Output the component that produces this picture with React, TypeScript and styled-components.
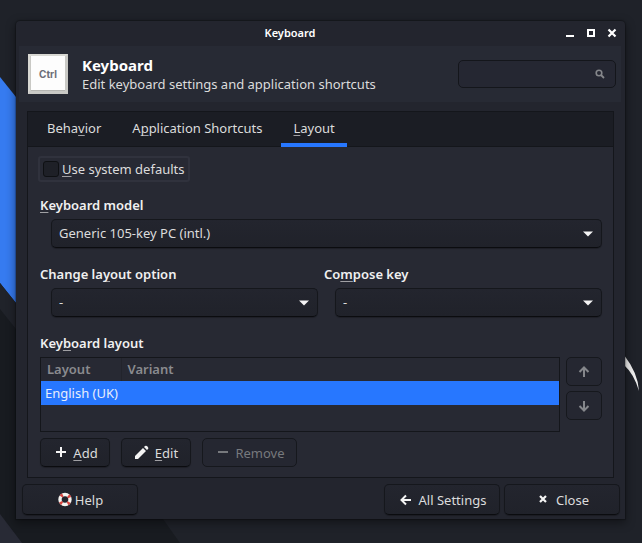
import React from "react";
import styled, { createGlobalStyle, css } from "styled-components";

const GlobalStyle = createGlobalStyle`
  *, *::before, *::after { box-sizing: border-box; }
  body { margin: 0; background: #1f2229; }
  body, button, input, select { font-family: "Noto Sans", sans-serif; font-size: 13px; color: #dcdcdc; }
  u { text-decoration-thickness: 1px; text-underline-offset: 2px; text-decoration-color: #a0a0a4; text-decoration-skip-ink: none; }
`;

const Desktop = styled.div`
  position: relative;
  min-height: 100vh;
  display: flex;
  flex-direction: column;
  padding: 21px 17px 24px 16px;
  overflow: hidden;
`;

const Wallpaper = styled.svg<{ $side: "left" | "right" }>`
  position: absolute;
  top: 0;
  ${(p) => (p.$side === "left" ? "left: 0;" : "right: 0;")}
`;

const Window = styled.main`
  position: relative;
  flex: 1;
  display: flex;
  flex-direction: column;
  background: #23252e;
  border-radius: 4px 4px 0 0;
  box-shadow: 0 0 1px 1px rgba(0, 0, 0, 0.25), 0 3px 10px 1px rgba(0, 0, 0, 0.4);
`;

const TitleBar = styled.header`
  display: grid;
  grid-template-columns: 1fr 61px;
  align-items: center;
  height: 25px;
  padding-bottom: 2px;
`;

const WindowTitle = styled.span`
  text-align: center;
  font-size: 11px;
  font-weight: 600;
  color: #fff;
`;

const WindowControls = styled.div`
  display: flex;
  gap: 9px;
`;

const WindowControl = styled.button`
  display: flex;
  width: 12px;
  height: 12px;
  padding: 1px;
  border: 0;
  background: none;
  color: #fff;
`;

const Banner = styled.section`
  display: flex;
  align-items: center;
  height: 56px;
  margin: 0 4px 0 3px;
  padding: 0 5px 0 9px;
  background: #272a34;
`;

const BannerText = styled.div`
  flex: 1;
  margin-left: 14px;
`;

const BannerTitle = styled.h1`
  margin: 0;
  font-size: 15px;
  line-height: 20px;
  font-weight: 700;
  color: #fff;
`;

const BannerSubtitle = styled.p`
  margin: 0;
  line-height: 18px;
`;

const SearchBox = styled.label`
  display: flex;
  align-items: center;
  width: 158px;
  height: 28px;
  padding: 0 10px;
  border: 1px solid #14161b;
  border-radius: 5px;
  background: #252732;
`;

const SearchInput = styled.input`
  flex: 1;
  min-width: 0;
  border: 0;
  outline: 0;
  background: none;
`;

const Notebook = styled.section`
  flex: 1;
  display: flex;
  flex-direction: column;
  margin: 9px 11px 0;
  border: 1px solid #14161b;
  background: #272933;
`;

const TabList = styled.div`
  display: flex;
  height: 35px;
  padding-left: 7px;
  background: #1b1d24;
  border-bottom: 1px solid #14161b;
`;

const Tab = styled.button<{ $active?: boolean }>`
  height: 35px;
  padding: 0 12px;
  margin-right: 7px;
  border: 0;
  background: none;
  border-bottom: 4px solid ${(p) => (p.$active ? "#2777ff" : "transparent")};
`;

const Page = styled.div`
  flex: 1;
  display: flex;
  flex-direction: column;
  padding: 9px 11px 0 12px;
`;

const CheckLabel = styled.label`
  align-self: flex-start;
  display: flex;
  align-items: center;
  gap: 3px;
  height: 26px;
  margin-left: -2px;
  padding: 0 3px;
  border: 2px solid #30323d;
  border-radius: 3px;
`;

const CheckBox = styled.input`
  appearance: none;
  width: 16px;
  height: 16px;
  margin: 0;
  border: 1px solid #0e1013;
  border-radius: 3px;
  background: #1e2027;
`;

const FieldRow = styled.div`
  display: flex;
  gap: 6px;
  margin: 14px 0 3px;
`;

const Field = styled.div`
  flex: 1;
  display: flex;
  flex-direction: column;
  min-width: 0;
`;

const caption = css`
  font-size: 13px;
  font-weight: 600;
  line-height: 18px;
  color: #f0f0f0;
`;

const FieldLabel = styled.label`
  ${caption}
  margin-bottom: 5px;
`;

const SectionTitle = styled.h2`
  ${caption}
  margin: 14px 0 5px;
`;

const raised = css`
  border: 1px solid #15171c;
  border-bottom-color: #0b0c0f;
  border-radius: 5px;
  background: linear-gradient(#23252e, #20222a);
  box-shadow: 0 1px 1px rgba(0, 0, 0, 0.25);
`;

const SelectWrap = styled.div`
  display: grid;
  align-items: center;
  margin-left: 11px;
  & > * { grid-area: 1 / 1; }
  svg { justify-self: end; margin-right: 9px; pointer-events: none; }
`;

const Select = styled.select`
  ${raised}
  appearance: none;
  width: 100%;
  height: 29px;
  padding: 0 30px 1px 7px;
`;

const ListArea = styled.div`
  display: flex;
  gap: 6px;
`;

const ListFrame = styled.div`
  flex: 1;
  height: 75px;
  border: 1px solid #14161b;
`;

const LayoutTable = styled.table`
  width: 100%;
  border-collapse: collapse;
  white-space: nowrap;
`;

const HeaderCell = styled.th<{ $first?: boolean }>`
  width: ${(p) => (p.$first ? "80px" : "auto")};
  height: 23px;
  padding: 0 6px 1px;
  border-right: ${(p) => (p.$first ? "1px solid #22242c" : "0")};
  text-align: left;
  font-weight: 600;
  color: #8a8b8f;
`;

const Cell = styled.td`
  height: 24px;
  padding: 0 0 0 4px;
  background: #2777ff;
  color: #e8eefb;
`;

const OrderButtons = styled.div`
  display: flex;
  flex-direction: column;
  gap: 5px;
`;

const Button = styled.button<{ $width: number; $footer?: boolean; $tight?: boolean }>`
  display: flex;
  align-items: center;
  justify-content: center;
  gap: ${(p) => (p.$tight ? 2 : 5)}px;
  width: ${(p) => p.$width}px;
  height: ${(p) => (p.$footer ? 31 : 29)}px;
  padding: 0;
  ${raised}
  &:disabled { color: #77797d; background: #252731; border-color: #16181d; box-shadow: none; }
`;

const ButtonRow = styled.div`
  display: flex;
  gap: 11px;
  margin: 6px 0 10px;
`;

const Footer = styled.footer`
  display: flex;
  gap: 4px;
  padding: 6px 5px 4px 6px;
`;

const Spacer = styled.div`
  flex: 1;
`;

const CtrlKeyIcon = () => (
  <svg width="40" height="40" viewBox="0 0 40 40" aria-hidden="true">
    <rect width="40" height="40" fill="#c9c9c5" />
    <path d="M0 0h40l-2 2H2v34l-2 4z" fill="#d8d8d3" />
    <rect x="3" y="2" width="34" height="35" fill="#b5b5b1" />
    <rect x="3" y="2" width="34" height="34" fill="#fdfdfd" />
    <text x="20" y="24" textAnchor="middle" fontFamily="Inter, sans-serif" fontWeight="700" fontSize="10" fill="#6c6e78">Ctrl</text>
  </svg>
);

const SearchIcon = () => (
  <svg width="10" height="10" viewBox="0 0 10 10" fill="none" stroke="#85878b" aria-hidden="true">
    <circle cx="4" cy="4" r="2.8" strokeWidth="1.6" />
    <path d="M6 6l3 3" strokeWidth="1.8" />
  </svg>
);

const Caret = () => (
  <svg width="10" height="6" viewBox="0 0 10 6" aria-hidden="true">
    <path d="M0 .5h10L5 5.500z" fill="#f4f4f4" />
  </svg>
);

const PlusIcon = () => (
  <svg width="16" height="16" viewBox="0 0 16 16" stroke="#f4f4f4" strokeWidth="2" aria-hidden="true">
    <path d="M4 7h10M9 2v10" />
  </svg>
);

const MinusIcon = () => (
  <svg width="16" height="16" viewBox="0 0 16 16" stroke="#77797d" strokeWidth="2" aria-hidden="true">
    <path d="M4 7h10" />
  </svg>
);

const PencilIcon = () => (
  <svg width="16" height="16" viewBox="0 0 16 16" fill="#f4f4f4" aria-hidden="true">
    <path d="M1 14v-3L9 3l3 3-8 8zM10 2l1-1q1-.7 2 .1L14 2.200q.8.900 0 1.800l-1 1z" />
  </svg>
);

const ArrowIcon = ({ turn, color }: { turn: number; color: string }) => (
  <svg width="16" height="16" viewBox="0 0 16 16" fill="none" stroke={color} strokeWidth="2" aria-hidden="true">
    <path d="M8 13V3.500M3.500 8L8 3.500 12.500 8" transform={`rotate(${turn} 8 8)`} />
  </svg>
);

const CrossIcon = () => (
  <svg width="10" height="10" viewBox="0 0 10 10" stroke="#fff" strokeWidth="2.200" aria-hidden="true">
    <path d="M1.500 1.500l7 7M8.500 1.500l-7 7" />
  </svg>
);

const CloseIcon = () => (
  <svg width="16" height="16" viewBox="0 0 16 16" stroke="#f4f4f4" strokeWidth="2.200" aria-hidden="true">
    <path d="M5 4l6 6M11 4l-6 6" />
  </svg>
);

const LifebuoyIcon = () => (
  <svg width="16" height="16" viewBox="0 0 16 16" fill="none" aria-hidden="true">
    <circle cx="8" cy="7.500" r="5" stroke="#f3f3f0" strokeWidth="3.400" />
    <circle cx="8" cy="7.500" r="5" stroke="#d9453f" strokeWidth="3.400" strokeDasharray="2.200 5.654" strokeDashoffset="-2.827" />
  </svg>
);

export default function App() {
  return (
    <>
      <GlobalStyle />
      <Desktop>
        <Wallpaper $side="left" width="200" height="543" viewBox="0 0 200 543" aria-hidden="true">
          <path d="M0 283l163 236 17 24H0z" fill="#181b20" />
          <path d="M0 77l40 50v206L0 283z" fill="#367bf0" />
          <path d="M0 283l40 50v26L0 309z" fill="#20232a" />
          <path d="M0 514l22 29H0z" fill="#282a35" />
        </Wallpaper>
        <Wallpaper $side="right" width="30" height="400" viewBox="0 0 30 400" aria-hidden="true">
          <path d="M12 355q14 18 15 36q-5-17-15-26z" fill="#efefef" />
        </Wallpaper>
        <Window>
          <TitleBar>
            <WindowTitle>Keyboard</WindowTitle>
            <WindowControls>
              <WindowControl aria-label="Minimize">
                <svg width="10" height="10" viewBox="0 0 10 10"><path d="M1 7h8v2H1z" fill="#fff" /></svg>
              </WindowControl>
              <WindowControl aria-label="Maximize">
                <svg width="10" height="10" viewBox="0 0 10 10"><path d="M2 2h6v6H2z" fill="none" stroke="#fff" strokeWidth="2" /></svg>
              </WindowControl>
              <WindowControl aria-label="Close window">
                <CrossIcon />
              </WindowControl>
            </WindowControls>
          </TitleBar>
          <Banner>
            <CtrlKeyIcon />
            <BannerText>
              <BannerTitle>Keyboard</BannerTitle>
              <BannerSubtitle>Edit keyboard settings and application shortcuts</BannerSubtitle>
            </BannerText>
            <SearchBox>
              <SearchInput aria-label="Search" />
              <SearchIcon />
            </SearchBox>
          </Banner>
          <Notebook>
            <TabList role="tablist">
              <Tab role="tab">Beha<u>v</u>ior</Tab>
              <Tab role="tab">A<u>p</u>plication Shortcuts</Tab>
              <Tab role="tab" aria-selected $active><u>L</u>ayout</Tab>
            </TabList>
            <Page role="tabpanel">
              <CheckLabel>
                <CheckBox type="checkbox" />
                <span><u>U</u>se system defaults</span>
              </CheckLabel>
              <FieldRow>
                <Field>
                  <FieldLabel htmlFor="model"><u>K</u>eyboard model</FieldLabel>
                  <SelectWrap>
                    <Select id="model"><option>Generic 105-key PC (intl.)</option></Select>
                    <Caret />
                  </SelectWrap>
                </Field>
              </FieldRow>
              <FieldRow>
                <Field>
                  <FieldLabel htmlFor="change">Change la<u>y</u>out option</FieldLabel>
                  <SelectWrap>
                    <Select id="change"><option>-</option></Select>
                    <Caret />
                  </SelectWrap>
                </Field>
                <Field>
                  <FieldLabel htmlFor="compose">Co<u>m</u>pose key</FieldLabel>
                  <SelectWrap>
                    <Select id="compose"><option>-</option></Select>
                    <Caret />
                  </SelectWrap>
                </Field>
              </FieldRow>
              <SectionTitle>Key<u>b</u>oard layout</SectionTitle>
              <ListArea>
                <ListFrame>
                  <LayoutTable>
                    <thead><tr><HeaderCell $first>Layout</HeaderCell><HeaderCell>Variant</HeaderCell></tr></thead>
                    <tbody><tr><Cell colSpan={2}>English (UK)</Cell></tr></tbody>
                  </LayoutTable>
                </ListFrame>
                <OrderButtons>
                  <Button $width={36} disabled aria-label="Move up"><ArrowIcon turn={0} color="#85878b" /></Button>
                  <Button $width={36} disabled aria-label="Move down"><ArrowIcon turn={180} color="#85878b" /></Button>
                </OrderButtons>
              </ListArea>
              <ButtonRow>
                <Button $width={70}><PlusIcon /><span><u>A</u>dd</span></Button>
                <Button $width={70}><PencilIcon /><span><u>E</u>dit</span></Button>
                <Button $width={95} disabled><MinusIcon /><span>Remove</span></Button>
              </ButtonRow>
            </Page>
          </Notebook>
          <Footer>
            <Button $width={116} $footer $tight><LifebuoyIcon /><span>Help</span></Button>
            <Spacer />
            <Button $width={116} $footer><ArrowIcon turn={-90} color="#f4f4f4" /><span>All Settings</span></Button>
            <Button $width={116} $footer><CloseIcon /><span>Close</span></Button>
          </Footer>
        </Window>
      </Desktop>
    </>
  );
}
